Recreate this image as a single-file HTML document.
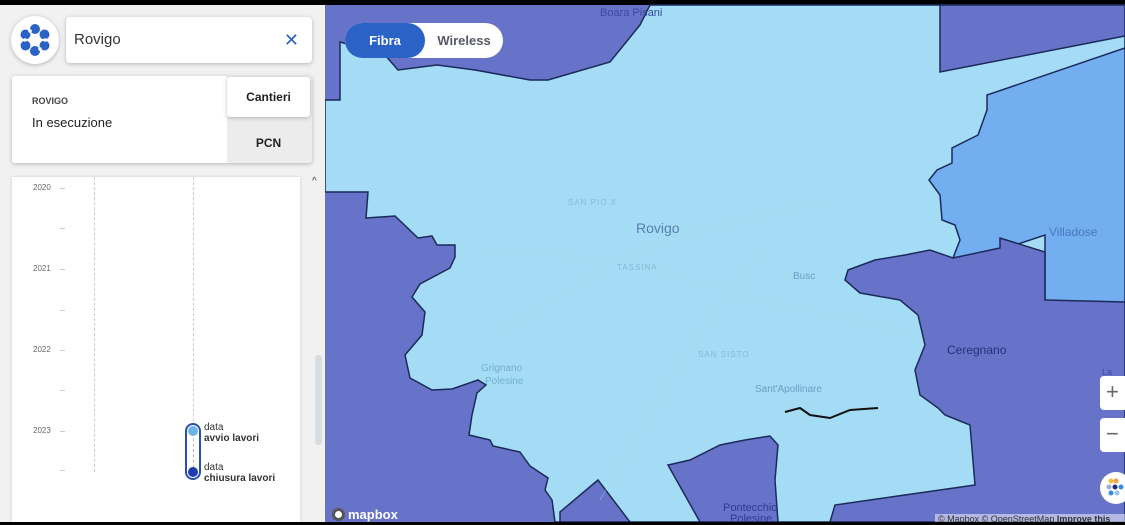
<!DOCTYPE html>
<html><head><meta charset="utf-8"><style>
*{margin:0;padding:0;box-sizing:border-box}
body{width:1125px;height:525px;overflow:hidden;background:#000;font-family:"Liberation Sans",sans-serif;position:relative}
.abs{position:absolute}
.sh{box-shadow:0 1px 4px rgba(0,0,0,.25)}
</style></head><body>
<svg class="abs" style="left:325px;top:0" width="800" height="525" viewBox="325 0 800 525">
<rect x="325" y="5" width="800" height="517" fill="#6673c8"/>
<polygon fill="#a3dcf4" stroke="#1b2a5a" stroke-width="1.5" points="340,42 385,55 398,70 437,65 475,70 530,80 548,80 610,62 640,25 650,5 1125,5 1125,522 555,522 552,500 545,490 548,478 530,466 520,452 493,446 490,440 469,435 472,415 477,393 486,385 478,380 452,389 432,390 410,378 405,355 422,335 425,312 412,297 420,284 450,268 455,257 455,245 437,245 432,236 418,238 395,216 366,218 368,192 325,192 325,100 340,100"/>
<polygon fill="#72aef0" stroke="#1b2a5a" stroke-width="1.5" points="1125,48 987,95 987,110 978,135 952,148 952,163 937,170 929,180 940,195 942,220 955,225 960,240 953,258 1000,250 1045,235 1045,300 1125,305"/>
<polygon fill="#6673c8" stroke="#1b2a5a" stroke-width="1.5" points="940,5 1125,5 1125,36 940,72"/>
<polygon fill="#6673c8" stroke="#1b2a5a" stroke-width="1.5" points="845,280 848,270 875,260 905,255 930,250 953,258 1000,248 1000,238 1045,252 1045,300 1125,302 1125,522 830,522 835,505 870,500 940,490 975,485 970,425 945,415 938,408 920,395 915,370 925,345 918,315 900,300 860,293"/>
<polygon fill="#6673c8" stroke="#1b2a5a" stroke-width="1.5" points="700,522 668,465 690,460 720,445 745,440 770,436 778,445 775,480 778,522"/>
<polygon fill="#6673c8" stroke="#1b2a5a" stroke-width="1.5" points="560,522 560,512 598,480 630,522"/>
<path d="M785,412 L800,408 L810,415 L830,418 L850,410 L878,408" stroke="#111" stroke-width="2" fill="none"/>
<g fill="none" stroke="#b8e4f7" stroke-width="1" opacity=".35">
<path d="M500,330 L640,250 L700,230 L820,200"/><path d="M600,500 L700,330 L760,250"/><path d="M480,250 L620,260 L760,300 L900,330"/>
</g>
<g font-family="Liberation Sans,sans-serif">
<text x="636" y="233" font-size="14" fill="#5a7fae">Rovigo</text>
<text x="1049" y="236" font-size="12" fill="#4a78bf">Villadose</text>
<text x="947" y="354" font-size="12" fill="#26307a">Ceregnano</text>
<text x="600" y="16" font-size="11" fill="#3a4aa0">Boara Pisani</text>
<text x="793" y="279" font-size="10" fill="#6c9ec5">Busc</text>
<text x="481" y="371" font-size="10" fill="#78aed0">Grignano</text>
<text x="485" y="384" font-size="10" fill="#78aed0">Polesine</text>
<text x="755" y="392" font-size="10" fill="#6c9ec5">Sant'Apollinare</text>
<text x="723" y="511" font-size="11" fill="#2f3c90">Pontecchio</text>
<text x="730" y="522" font-size="11" fill="#2f3c90">Polesine</text>
<text x="568" y="205" font-size="8" fill="#8ab8d6" letter-spacing="1">SAN PIO X</text>
<text x="617" y="270" font-size="8" fill="#8ab8d6" letter-spacing="1">TASSINA</text>
<text x="698" y="357" font-size="8" fill="#8ab8d6" letter-spacing="1">SAN SISTO</text>
<text x="1102" y="375" font-size="9" fill="#3a4aa0">La</text>
</g>
</svg>
<div class="abs" style="left:345px;top:23px;width:158px;height:35px;background:#fff;border-radius:18px"></div>
<div class="abs" style="left:345px;top:23px;width:80px;height:35px;background:#2a62c6;border-radius:18px;color:#fff;font-weight:bold;font-size:13px;line-height:35px;text-align:center">Fibra</div>
<div class="abs" style="left:425px;top:23px;width:78px;height:35px;color:#555a66;font-weight:bold;font-size:13px;line-height:35px;text-align:center">Wireless</div>
<div class="abs" style="left:1100px;top:376px;width:30px;height:34px;background:#fff;border-radius:4px;color:#666;font-size:22px;line-height:32px;padding-left:6px">+</div>
<div class="abs" style="left:1100px;top:418px;width:30px;height:34px;background:#fff;border-radius:4px;color:#666;font-size:22px;line-height:32px;padding-left:6px">−</div>
<div class="abs" style="left:1100px;top:472px;width:32px;height:32px;background:#fff;border-radius:50%"></div>
<svg class="abs" style="left:1106px;top:478px" width="19" height="20"><circle cx="5" cy="3" r="2.5" fill="#f0c040"/><circle cx="10" cy="3" r="2.5" fill="#f0a050"/><circle cx="3" cy="9" r="2.5" fill="#a0b0c8"/><circle cx="9" cy="9" r="2.5" fill="#1a2a8a"/><circle cx="15" cy="9" r="2.5" fill="#3a8ae0"/><circle cx="5" cy="15" r="2.5" fill="#3a8ae0"/><circle cx="11" cy="15" r="2.5" fill="#8cc8f0"/></svg>
<div class="abs" style="left:935px;top:514px;width:190px;height:9px;background:rgba(255,255,255,.5);font-size:9px;color:#333;line-height:11px;padding-left:3px;overflow:hidden;white-space:nowrap">© Mapbox © OpenStreetMap <b>Improve this</b></div>
<div class="abs" style="left:332px;top:507px;font-size:13px;font-weight:bold;color:#fff;display:flex;align-items:center"><span style="display:inline-block;width:13px;height:13px;border-radius:50%;background:#fff;margin-right:3px;border:3px solid #555"></span>mapbox</div>
<div class="abs" style="left:0;top:5px;width:325px;height:517px;background:#f1f1f1"></div>
<div class="abs sh" style="left:11px;top:16px;width:48px;height:48px;background:#fff;border-radius:50%"></div>
<svg class="abs" style="left:17px;top:22px" width="36" height="36" viewBox="-18 -18 36 36">
<g fill="#2a62c6"><circle cx="0" cy="-11" r="5"/><circle cx="0" cy="11" r="5"/><circle cx="-9.5" cy="-5.5" r="5"/><circle cx="9.5" cy="-5.5" r="5"/><circle cx="-9.5" cy="5.5" r="5"/><circle cx="9.5" cy="5.5" r="5"/></g>
<circle r="6" fill="#fff"/><g fill="#fff"><circle cx="-5" cy="-9" r="1.8"/><circle cx="5" cy="9" r="1.8"/><circle cx="-10" cy="0" r="1.8"/><circle cx="10" cy="0" r="1.8"/></g>
</svg>
<div class="abs sh" style="left:66px;top:17px;width:246px;height:46px;background:#fff;border-radius:4px;font-size:15px;color:#333;line-height:46px;padding-left:8px">Rovigo<span style="position:absolute;right:13px;color:#2a62c6;font-size:18px">✕</span></div>
<div class="abs sh" style="left:12px;top:76px;width:300px;height:87px;background:#fff;border-radius:3px;overflow:hidden">
<div class="abs" style="left:20px;top:20px;font-size:9px;font-weight:bold;color:#444">ROVIGO</div>
<div class="abs" style="left:20px;top:39px;font-size:13px;color:#222">In esecuzione</div>
<div class="abs" style="left:215px;top:0;width:85px;height:87px;background:#ececec"></div>
<div class="abs sh" style="left:215px;top:1px;width:83px;height:40px;background:#fff;border-radius:3px;font-size:12px;font-weight:bold;color:#222;line-height:40px;text-align:center">Cantieri</div>
<div class="abs" style="left:215px;top:48px;width:83px;height:39px;font-size:12px;font-weight:bold;color:#222;line-height:39px;text-align:center">PCN</div>
</div>
<div class="abs" style="left:12px;top:177px;width:288px;height:345px;background:#fff;box-shadow:0 0 3px rgba(0,0,0,.15)"></div>
<div class="abs" style="left:94px;top:177px;height:295px;border-left:1px dashed #ccc"></div>
<div class="abs" style="left:193px;top:177px;height:300px;border-left:1px dashed #ccc"></div>
<div class="abs" style="left:33px;top:183px;font-size:8px;color:#666">2020</div>
<div class="abs" style="left:33px;top:264px;font-size:8px;color:#666">2021</div>
<div class="abs" style="left:33px;top:345px;font-size:8px;color:#666">2022</div>
<div class="abs" style="left:33px;top:426px;font-size:8px;color:#666">2023</div>
<div class="abs" style="left:60px;top:188px;width:5px;border-top:1px solid #ccc"></div>
<div class="abs" style="left:60px;top:228px;width:5px;border-top:1px solid #ccc"></div>
<div class="abs" style="left:60px;top:269px;width:5px;border-top:1px solid #ccc"></div>
<div class="abs" style="left:60px;top:310px;width:5px;border-top:1px solid #ccc"></div>
<div class="abs" style="left:60px;top:350px;width:5px;border-top:1px solid #ccc"></div>
<div class="abs" style="left:60px;top:390px;width:5px;border-top:1px solid #ccc"></div>
<div class="abs" style="left:60px;top:431px;width:5px;border-top:1px solid #ccc"></div>
<div class="abs" style="left:60px;top:470px;width:5px;border-top:1px solid #ccc"></div>
<div class="abs" style="left:185px;top:423px;width:16px;height:57px;border:2px solid #2a4fb0;border-radius:8px;background:#fff"></div>
<div class="abs" style="left:193px;top:433px;height:40px;border-left:1px dashed #bbb"></div>
<div class="abs" style="left:188px;top:426px;width:10px;height:10px;border-radius:50%;background:#6ab4ea"></div>
<div class="abs" style="left:188px;top:467px;width:10px;height:10px;border-radius:50%;background:#1f3bb0"></div>
<div class="abs" style="left:204px;top:422px;font-size:10px;color:#333;line-height:11px">data<br><b>avvio lavori</b></div>
<div class="abs" style="left:204px;top:462px;font-size:10px;color:#333;line-height:11px;height:20px;overflow:hidden">data<br><b>chiusura lavori</b></div>
<div class="abs" style="left:312px;top:176px;font-size:10px;color:#444">^</div>
<div class="abs" style="left:315px;top:355px;width:7px;height:90px;background:#d8dde3;border-radius:3px"></div>
<div class="abs" style="left:0;top:522px;width:1125px;height:3px;background:#000"></div>
</body></html>
